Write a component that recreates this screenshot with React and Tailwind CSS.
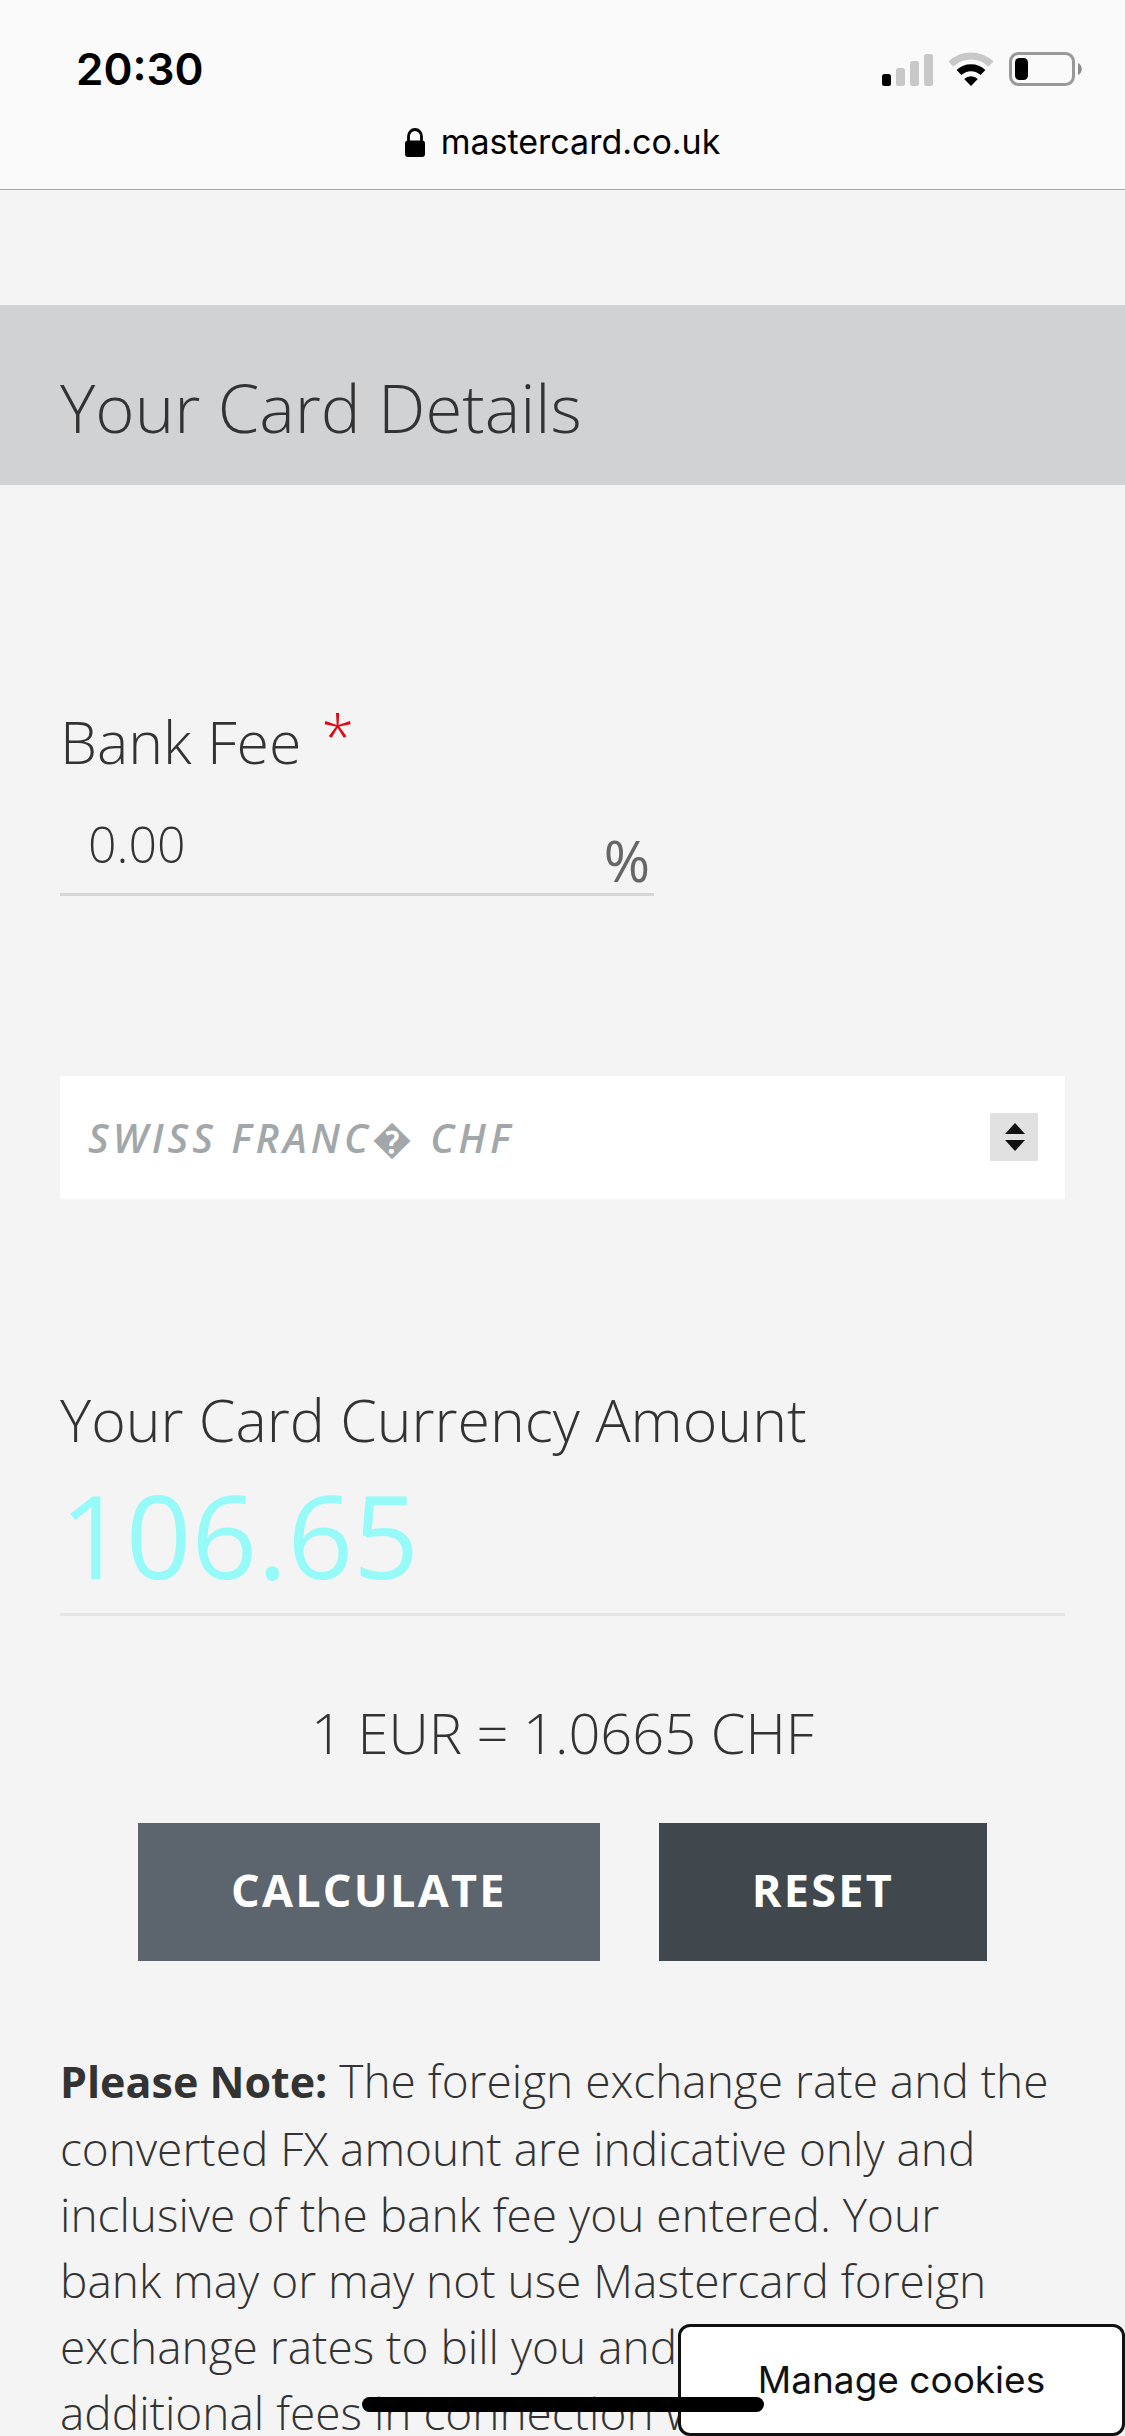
import React, { useState } from 'react'

function SignalIcon() {
  return (
    <svg className="w-[51px] h-[33px]" viewBox="0 0 51 33" aria-hidden="true">
      <rect x="0" y="21" width="9" height="12" rx="2.5" fill="#000" />
      <rect x="14" y="15" width="9" height="18" rx="2.5" fill="#c8c8c8" />
      <rect x="28" y="8" width="9" height="25" rx="2.5" fill="#c8c8c8" />
      <rect x="42" y="1" width="9" height="32" rx="2.5" fill="#c8c8c8" />
    </svg>
  )
}

function WifiIcon() {
  return (
    <svg className="w-[46px] h-[34px]" viewBox="0 0 46 34" aria-hidden="true">
      <path d="M3 12 A 29 29 0 0 1 43 12" fill="none" stroke="#c8c8c8" strokeWidth="7" />
      <path d="M11 20.5 A 17.5 17.5 0 0 1 35 20.5" fill="none" stroke="#000" strokeWidth="7" />
      <path d="M23 34 L16.2 27 A 9.6 9.6 0 0 1 29.8 27 Z" fill="#000" />
    </svg>
  )
}

function BatteryIcon() {
  return (
    <svg className="w-[74px] h-[34px]" viewBox="0 0 74 34" aria-hidden="true">
      <rect x="1.5" y="1.5" width="63" height="31" rx="8" fill="none" stroke="#999" strokeWidth="3" />
      <rect x="6" y="6" width="13" height="22" rx="4.5" fill="#000" />
      <path d="M69 11 C74 13 74 21 69 23 Z" fill="#8c8c8c" />
    </svg>
  )
}

function LockIcon() {
  return (
    <svg className="w-[20px] h-[29px]" viewBox="0 0 20 29" aria-hidden="true">
      <path d="M3.5 14 V8.5 A6.5 7 0 0 1 16.5 8.5 V14" fill="none" stroke="#000" strokeWidth="2.8" />
      <rect x="0" y="12.5" width="20" height="16.5" rx="3" fill="#000" />
    </svg>
  )
}

function StepperIcon() {
  return (
    <svg
      className="absolute right-[27px] top-[37px] w-12 h-12 pointer-events-none"
      viewBox="0 0 48 48"
      aria-hidden="true"
    >
      <rect width="48" height="48" fill="#e1e1e1" />
      <path d="M25 10 L35 21 H15 Z" fill="#111" />
      <path d="M25 38 L35 27 H15 Z" fill="#111" />
    </svg>
  )
}

export default function App() {
  const [bankFee, setBankFee] = useState('0.00')
  const [currency, setCurrency] = useState('CHF')

  return (
    <div className="h-screen overflow-hidden bg-[#f4f4f4] text-[#333] font-['Open_Sans',sans-serif] font-light">
      {/* Browser bar */}
      <header className="h-[190px] bg-[#fafafa] border-b border-[#a9a9a9] text-black font-['Inter',sans-serif]">
        <div className="flex items-center justify-between h-[138px] pl-[76px] pr-[42px]">
          <span className="text-[44px] leading-[52px] font-semibold">20:30</span>
          <div className="flex items-center gap-[15px]">
            <SignalIcon />
            <WifiIcon />
            <BatteryIcon />
          </div>
        </div>
        <div className="flex items-center justify-center gap-4 -mt-[18px] text-[34px] leading-[44px] font-normal">
          <LockIcon />
          <span>mastercard.co.uk</span>
        </div>
      </header>

      <main>
        <div className="mt-[115px] h-[180px] bg-[#d1d2d4] px-[60px] pt-[56px]">
          <h1 className="text-[67px] leading-[92px]">Your Card Details</h1>
        </div>

        <form className="px-[60px]" onSubmit={(e) => e.preventDefault()}>
          {/* Bank fee */}
          <div className="pt-[218px]">
            <label htmlFor="bank-fee" className="flex gap-5 text-[59px] leading-[76px]">
              Bank Fee <span className="leading-[64px] text-[#e30613]">*</span>
            </label>
            <div className="flex items-end w-[594px] h-[117px] border-b-3 border-[#d6d6d6]">
              <input
                id="bank-fee"
                type="text"
                inputMode="decimal"
                value={bankFee}
                onChange={(e) => setBankFee(e.target.value)}
                className="flex-1 min-w-0 h-[98px] pl-7 bg-transparent text-[50px] leading-[64px] outline-none"
              />
              <span className="pr-1 text-[56px] leading-[66px] font-normal text-[#666]">%</span>
            </div>
          </div>

          {/* Card currency */}
          <div className="relative mt-[180px]">
            <select
              aria-label="Your card currency"
              value={currency}
              onChange={(e) => setCurrency(e.target.value)}
              className="block w-full h-[123px] pl-7 pr-24 appearance-none bg-white text-[40px] tracking-widest font-semibold italic text-[#a2a7a9] outline-none"
            >
              <option value="CHF">SWISS FRANC� CHF</option>
            </select>
            <StepperIcon />
          </div>

          {/* Result */}
          <div className="mt-[182px] border-b-3 border-[#e4e4e4]">
            <h2 className="text-[59px] leading-[76px]">Your Card Currency Amount</h2>
            <output className="block text-[115px] leading-[156px] font-normal text-[#96fbf8]">
              106.65
            </output>
          </div>
          <p className="mt-[78px] text-center text-[56px] leading-[76px]">1 EUR = 1.0665 CHF</p>

          <div className="flex justify-center gap-[59px] mt-[53px]">
            <button
              type="submit"
              className="h-[138px] px-[93px] pb-1 bg-[#5c656e] text-[45px] tracking-wider font-bold text-white"
            >
              CALCULATE
            </button>
            <button
              type="reset"
              onClick={() => setBankFee('0.00')}
              className="h-[138px] px-[93px] pb-1 bg-[#40474d] text-[45px] tracking-wider font-bold text-white"
            >
              RESET
            </button>
          </div>
        </form>

        <p className="mt-[86px] px-[60px] text-[46px] leading-[66px] whitespace-nowrap">
          <strong className="text-[43px] font-bold">Please Note:</strong> The foreign exchange rate and the
          <br />
          converted FX amount are indicative only and
          <br />
          inclusive of the bank fee you entered. Your
          <br />
          bank may or may not use Mastercard foreign
          <br />
          exchange rates to bill you and
          <br />
          additional fees in connection with
        </p>
      </main>

      <button
        type="button"
        className="fixed right-0 bottom-0 w-[447px] h-[112px] bg-white border-3 border-[#111] rounded-xl text-[37px] text-[#111] font-normal font-['Inter',sans-serif]"
      >
        Manage cookies
      </button>

      {/* Home indicator */}
      <div className="fixed bottom-6 left-1/2 -translate-x-1/2 w-[402px] h-[15px] rounded-full bg-black" />
    </div>
  )
}
